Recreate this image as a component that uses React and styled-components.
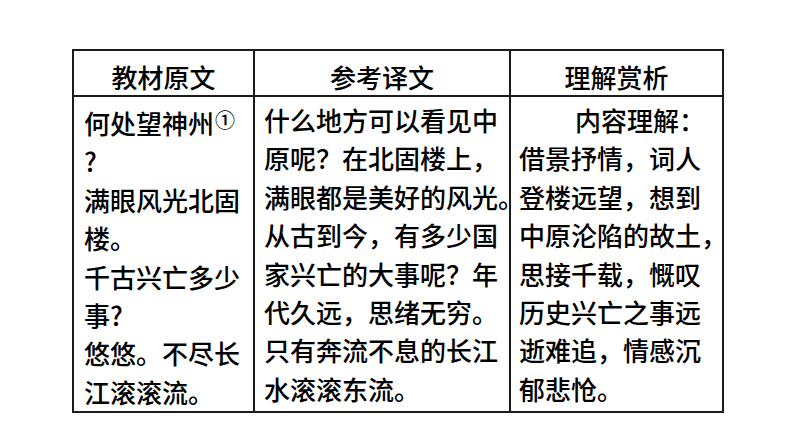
import React from "react";
import styled, { createGlobalStyle } from "styled-components";

const GlobalStyle = createGlobalStyle`
  html, body {
    margin: 0;
    padding: 0;
    background: #ffffff;
  }
  body {
    font-family: "Noto Sans CJK SC", "Noto Sans", sans-serif;
    color: #000;
  }
`;

// Styled Components
const Page = styled.div`
  width: 794px;
  height: 447px;
  box-sizing: border-box;
  padding: 49px 0 0 72px;
  overflow: hidden;
`;

const Table = styled.table`
  border-collapse: collapse;
  table-layout: fixed;
  width: 651px;
`;

const HeadCell = styled.th`
  border: 2px solid #1c1c1c;
  height: 46px;
  padding: 7px 0 0;
  box-sizing: border-box;
  font-size: 26px;
  font-weight: 500;
  line-height: 30px;
  text-align: center;
  vertical-align: middle;
`;

const BodyCell = styled.td`
  border: 2px solid #1c1c1c;
  padding: 4px 0 0 ${(p) => p.$pad}px;
  vertical-align: top;
  overflow: visible;
`;

const Line = styled.div`
  font-size: 26px;
  font-weight: 500;
  line-height: 38.4px;
  white-space: nowrap;
  text-indent: ${(p) => (p.$indent ? "56px" : "0")};
`;

const Note = styled.span`
  font-size: 20px;
  vertical-align: 6px;
  margin-left: 1px;
`;

const columns = [
  {
    title: "教材原文",
    width: 181,
    pad: 10,
    lines: [
      <>何处望神州<Note>①</Note></>,
      "?",
      "满眼风光北固",
      "楼。",
      "千古兴亡多少",
      "事?",
      "悠悠。不尽长",
      "江滚滚流。",
    ],
  },
  {
    title: "参考译文",
    width: 256,
    pad: 9,
    lines: [
      "什么地方可以看见中",
      "原呢？在北固楼上，",
      "满眼都是美好的风光。",
      "从古到今，有多少国",
      "家兴亡的大事呢？年",
      "代久远，思绪无穷。",
      "只有奔流不息的长江",
      "水滚滚东流。",
    ],
  },
  {
    title: "理解赏析",
    width: 213,
    pad: 8,
    indentFirst: true,
    lines: [
      "内容理解：",
      "借景抒情，词人",
      "登楼远望，想到",
      "中原沦陷的故土，",
      "思接千载，慨叹",
      "历史兴亡之事远",
      "逝难追，情感沉",
      "郁悲怆。",
    ],
  },
];

const App = () => {
  return (
    <>
      <GlobalStyle />
      <Page>
        <Table>
          <colgroup>
            {columns.map((c) => (
              <col key={c.title} style={{ width: c.width }} />
            ))}
          </colgroup>
          <thead>
            <tr>
              {columns.map((c) => (
                <HeadCell key={c.title}>{c.title}</HeadCell>
              ))}
            </tr>
          </thead>
          <tbody>
            <tr>
              {columns.map((c) => (
                <BodyCell key={c.title} $pad={c.pad}>
                  {c.lines.map((line, i) => (
                    <Line key={i} $indent={c.indentFirst && i === 0}>
                      {line}
                    </Line>
                  ))}
                </BodyCell>
              ))}
            </tr>
          </tbody>
        </Table>
      </Page>
    </>
  );
};

export default App;
